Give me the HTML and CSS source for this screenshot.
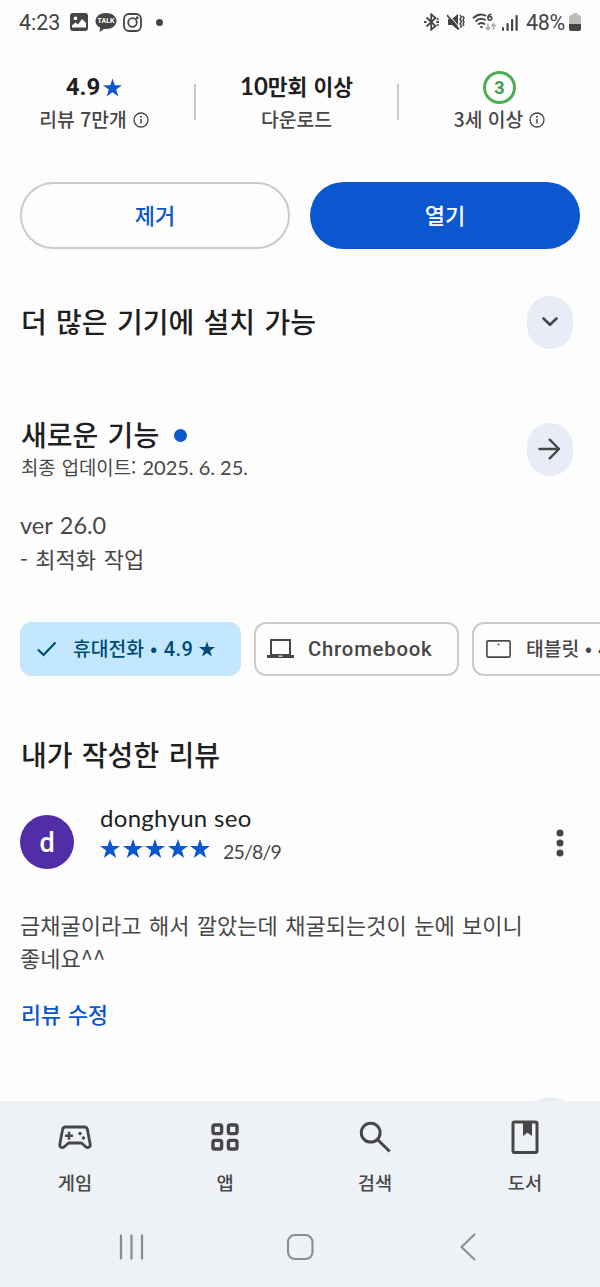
FILE: index.html
```html
<!DOCTYPE html>
<html lang="ko">
<head>
<meta charset="utf-8">
<title>Play</title>
<link rel="stylesheet" href="styles.css">
</head>
<body>
<svg class="defs" width="0" height="0">
  <symbol id="star" viewBox="0 0 20 19"><path d="M10 0l2.4 7.1h7.6l-6.1 4.5 2.3 7.4-6.2-4.5L3.8 19l2.3-7.4L0 7.1h7.6z"/></symbol>
  <symbol id="info" viewBox="0 0 16 16"><circle cx="8" cy="8" r="7" fill="none" stroke="currentColor" stroke-width="1.3"/><path d="M8 7v4.6" stroke="currentColor" stroke-width="1.5"/><circle cx="8" cy="4.7" r="1" fill="currentColor"/></symbol>
</svg>
<div class="screen">
  <header class="status">
    <div class="status-left">
      <span class="clock">4:23</span>
      <svg class="s-img" width="18" height="18" viewBox="0 0 18 18"><path fill="currentColor" fill-rule="evenodd" d="M3 0h12a3 3 0 0 1 3 3v12a3 3 0 0 1-3 3H3a3 3 0 0 1-3-3V3a3 3 0 0 1 3-3zM2 14.5h14V10l-4-4-4 5.5-2.500-2L2 12.500zM5.500 3.500a1.800 1.800 0 1 0 .01 0z"/></svg>
      <span class="talk">
        <svg width="22" height="19" viewBox="0 0 22 19"><path fill="currentColor" d="M11 0c6 0 10.500 3.500 10.500 8S17 16 11 16l-2-.1L4.500 19l.7-4.200C2.200 13.400.500 11 .500 8 .500 3.500 5 0 11 0z"/></svg>
        <b class="talk-label">TALK</b>
      </span>
      <svg class="s-insta" width="19" height="19" viewBox="0 0 19 19" fill="none" stroke="currentColor" stroke-width="1.8"><rect x="1" y="1" width="17" height="17" rx="5"/><circle cx="9.500" cy="9.500" r="4.300"/><circle cx="14.200" cy="4.800" r=".6"/></svg>
      <span class="s-dot"></span>
    </div>
    <div class="status-right">
      <svg width="17" height="18" viewBox="0 0 17 18" fill="none" stroke="currentColor" stroke-width="1.800"><path d="M3.500 4.500l9 8.500-4.300 3.700V1.300l4.300 3.700-9 8.500"/><path d="M1 9h2.500M13.200 9h2.800M14 6.500l1.500-1M14 11.500l1.500 1" /></svg>
      <svg width="18" height="18" viewBox="0 0 18 18" fill="none" stroke="currentColor"><path fill="currentColor" stroke="none" d="M1 6h4l6-5v16l-6-5H1z"/><path d="M1.300 1l12 14.500" stroke="#fdfdfd" stroke-width="1"/><path d="M0 2l12 14.500" stroke-width="1.700"/><path d="M13 2l1.500 2-1.500 2 1.500 2.500L13 11l1.500 2-1 2M16 3l1 2-1 2 1 2-1 2 1 2" stroke-width="1.500"/></svg>
      <svg width="25" height="19" viewBox="0 0 25 19" fill="none" stroke="currentColor" stroke-width="1.900"><path d="M1 5.300c4-4 9-4.600 13-2.400M3.500 8.500c3-3 7-3.400 10.200-1.200M6 11.500c2-2 5-2 7 0"/><circle cx="9.500" cy="14" r="1.200" fill="currentColor" stroke="none"/><path d="M19.500 1.200c-3 .3-3.700 2-3.700 3.800M17.800 3.400a1.900 1.900 0 1 0 .1 0" stroke-width="1.600"/><path d="M16 10.500v6M13.800 14.300l2.200 2.500 2.200-2.500M21.500 17v-6M19.300 13.300l2.200-2.500 2.200 2.500" stroke="#aaa" stroke-width="1.500"/></svg>
      <svg class="s-signal" width="17" height="17" viewBox="0 0 17 17" fill="currentColor"><rect x="0" y="13" width="2" height="4" rx="1"/><rect x="4.500" y="9" width="2.200" height="8" rx="1"/><rect x="9" y="5" width="2.200" height="12" rx="1"/><rect x="13.500" y="1" width="2.200" height="16" rx="1"/></svg>
      <span class="percent">48%</span>
      <svg class="s-batt" width="12" height="18" viewBox="0 0 12 18"><path fill="#bcbcbc" d="M3.500 0h5v2H10a2 2 0 0 1 2 2v7H0V4a2 2 0 0 1 2-2h1.500z"/><path fill="currentColor" d="M0 11h12v5a2 2 0 0 1-2 2H2a2 2 0 0 1-2-2z"/></svg>
    </div>
  </header>

  <section class="stats">
    <div class="stat stat-rating">
      <div class="stat-top"><span class="score">4.9</span><svg class="blue" width="19" height="19"><use href="#star"/></svg></div>
      <div class="stat-sub">리뷰 7만개<svg width="16" height="16"><use href="#info"/></svg></div>
    </div>
    <i class="divider"></i>
    <div class="stat">
      <div class="stat-top stat-ko"><span class="lat">10</span>만회 이상</div>
      <div class="stat-sub">다운로드</div>
    </div>
    <i class="divider"></i>
    <div class="stat">
      <div class="stat-top"><span class="age">3</span></div>
      <div class="stat-sub">3세 이상<svg width="16" height="16"><use href="#info"/></svg></div>
    </div>
  </section>

  <section class="actions">
    <button class="btn btn-outline">제거</button>
    <button class="btn btn-fill">열기</button>
  </section>

  <section class="row row-devices">
    <h2 class="title">더 많은 기기에 설치 가능</h2>
    <span class="pill"><svg width="24" height="24" viewBox="0 0 24 24" fill="none" stroke="currentColor" stroke-width="2.600" stroke-linecap="round" stroke-linejoin="round"><path d="M5.500 8.500l6.500 6.300 6.500-6.300"/></svg></span>
  </section>

  <section class="row row-news">
    <div>
      <h2 class="title title-news">새로운 기능<i class="news-dot"></i></h2>
      <p class="updated">최종 업데이트: <span class="lat">2025. 6. 25.</span></p>
    </div>
    <span class="pill"><svg width="24" height="24" viewBox="0 0 24 24" fill="none" stroke="currentColor" stroke-width="2.400" stroke-linecap="round" stroke-linejoin="round"><path d="M1.500 12H21M11.700 2.700L21 12l-9.300 9.300"/></svg></span>
  </section>
  <p class="notes"><span class="lat ver">ver 26.0</span><br>- 최적화 작업</p>

  <div class="chips">
    <span class="chip chip-on">
      <svg width="20" height="16" viewBox="0 0 20 16" fill="none" stroke="currentColor" stroke-width="2.200"><path d="M1 8.500l5.500 5.500L18.500 1.500"/></svg>
      <span class="chip-text">휴대전화 • <span class="chip-num">4.9</span></span><svg class="chip-star" width="16" height="16"><use href="#star"/></svg>
    </span>
    <span class="chip chip-book">
      <svg width="27" height="20" viewBox="0 0 27 20"><path fill="none" stroke="currentColor" stroke-width="2" d="M4 1h19v15H4z"/><path fill="currentColor" d="M0 16h27v3H0z"/><path fill="#ddd" d="M11.500 16.500h4v1.300h-4z"/></svg>
      <span class="chrome">Chromebook</span>
    </span>
    <span class="chip chip-tab">
      <svg width="25" height="18" viewBox="0 0 25 18"><rect x=".9" y=".9" width="23.200" height="16.200" rx="1" fill="none" stroke="currentColor" stroke-width="1.600"/><circle cx="12.500" cy="4.500" r=".9" fill="currentColor"/></svg>
      <span class="chip-text">태블릿 • <span class="chip-num">4</span></span>
    </span>
  </div>

  <h2 class="title title-review">내가 작성한 리뷰</h2>
  <section class="reviewer">
    <span class="avatar">d</span>
    <div class="who">
      <div class="name">donghyun seo</div>
      <div class="rating">
        <svg width="20" height="19"><use href="#star"/></svg><svg width="20" height="19"><use href="#star"/></svg><svg width="20" height="19"><use href="#star"/></svg><svg width="20" height="19"><use href="#star"/></svg><svg width="20" height="19"><use href="#star"/></svg>
        <span class="date">25/8/9</span>
      </div>
    </div>
    <svg class="more" width="8" height="28" viewBox="0 0 8 28" fill="currentColor"><circle cx="4" cy="4" r="3.500"/><circle cx="4" cy="14" r="3.500"/><circle cx="4" cy="24" r="3.500"/></svg>
  </section>
  <p class="review">금채굴이라고 해서 깔았는데 채굴되는것이 눈에 보이니<br>좋네요<span class="caret">^^</span></p>
  <a class="edit">리뷰 수정</a>
  <div class="peek"><span class="pill"></span></div>

  <footer class="bottom">
    <nav class="tabs">
      <span class="tab"><svg width="36" height="36" viewBox="0 0 36 36" fill="none" stroke="currentColor" stroke-width="2.800" stroke-linejoin="round"><path d="M8.500 8h19c1.500 0 2.600 1 2.900 2.500l2.800 14.800c.5 3-2.500 4.300-4.500 2.500L24.500 24h-13l-4.200 3.800c-2 1.800-5 .5-4.500-2.500L5.600 10.500C5.900 9 7 8 8.500 8z"/><path d="M12 12.800v8M8 16.800h8" stroke-width="2.400"/><circle cx="23" cy="14.500" r="1.700" fill="currentColor" stroke="none"/><circle cx="26.500" cy="19" r="1.700" fill="currentColor" stroke="none"/></svg>게임</span>
      <span class="tab"><svg width="36" height="36" viewBox="0 0 36 36" fill="none" stroke="currentColor" stroke-width="3.400"><rect x="6" y="6" width="8.600" height="8.600" rx="1.800"/><rect x="21.400" y="6" width="8.600" height="8.600" rx="1.800"/><rect x="6" y="21.400" width="8.600" height="8.600" rx="1.800"/><rect x="21.400" y="21.400" width="8.600" height="8.600" rx="1.800"/></svg>앱</span>
      <span class="tab"><svg width="36" height="36" viewBox="0 0 36 36" fill="none" stroke="currentColor" stroke-width="3"><circle cx="13.700" cy="13.700" r="9.400"/><path d="M20.500 20.500l12.200 12"/></svg>검색</span>
      <span class="tab"><svg width="36" height="36" viewBox="0 0 36 36"><rect x="6" y="3" width="24" height="30.500" rx="1.500" fill="none" stroke="currentColor" stroke-width="3"/><path fill="currentColor" d="M16 3h9v14l-4.500-3.200L16 17z"/></svg>도서</span>
    </nav>
    <div class="sysnav">
      <svg width="26" height="28" viewBox="0 0 26 28" fill="none" stroke="currentColor" stroke-width="2.300" stroke-linecap="round"><path d="M2 2.500v23M12.500 2.500v23M23 2.500v23"/></svg>
      <svg class="home" width="28" height="28" viewBox="0 0 28 28" fill="none" stroke="currentColor" stroke-width="2.100"><rect x="2" y="2" width="24.500" height="24" rx="7"/></svg>
      <svg width="18" height="28" viewBox="0 0 18 28" fill="none" stroke="currentColor" stroke-width="2.100" stroke-linecap="round"><path d="M15.500 1.500L2.500 14l13 12.500"/></svg>
    </div>
  </footer>
</div>
</body>
</html>
```
FILE: styles.css
```css
* { box-sizing: border-box; margin: 0; padding: 0; }
body {
  background: #fdfdfd;
  color: #474747;
  font-family: "Noto Sans CJK KR", sans-serif;
  overflow: hidden;
}
svg { display: block; flex: none; }
.defs { position: absolute; }
.screen { width: 600px; height: 1287px; display: flex; flex-direction: column; overflow: hidden; }
.lat { font-family: Lato, sans-serif; }
.blue { fill: #0b57d0; }

.status { height: 44px; padding: 0 19px; display: flex; justify-content: space-between; align-items: center; color: #454545; font-family: Roboto, sans-serif; font-size: 21.5px; flex: none; }
.status-left, .status-right { display: flex; align-items: center; }
.clock { width: 51px; }
.talk { position: relative; margin: 0 6px 0 7px; }
.talk-label { position: absolute; left: 0; top: 4px; width: 22px; text-align: center; font-size: 7px; line-height: 8px; color: #fff; }
.s-dot { width: 7px; height: 7px; border-radius: 50%; background: #454545; margin-left: 14px; }
.status-right { gap: 7px; }
.s-signal { margin-left: -2px; }
.percent { letter-spacing: -0.3px; }
.s-batt { margin-left: -3px; }

.stats { height: 138px; padding-top: 25px; display: grid; grid-template-columns: 194px 2px 201px 2px 201px; flex: none; }
.stat { display: flex; flex-direction: column; align-items: center; }
.stat-rating { padding-right: 6px; }
.stat-top { height: 36px; display: flex; align-items: center; font-size: 21.500px; font-weight: 700; color: #1f1f1f; }
.score { font-family: Roboto, sans-serif; font-size: 24px; margin-right: 3px; }
.stat-ko { padding-bottom: 3px; }
.stat-ko .lat { font-size: 24px; }
.stat-sub { height: 28px; display: flex; align-items: center; gap: 6px; font-size: 19.300px; font-weight: 500; white-space: pre; }
.stat-sub svg { margin-top: 2px; }
.divider { width: 2px; height: 36px; margin-top: 15px; background: #c9c9c9; }
.age { width: 33px; height: 33px; border: 3px solid #4caf50; border-radius: 50%; color: #43a047; font: 700 18px/28px Roboto, sans-serif; text-align: center; }

.actions { display: grid; grid-template-columns: 1fr 1fr; gap: 20px; padding: 0 20px; height: 67px; flex: none; }
.btn { height: 67px; border-radius: 34px; font: 500 22px/30px "Noto Sans CJK KR", sans-serif; padding-bottom: 4px; }
.btn-outline { border: 2px solid #cbcbcb; background: transparent; color: #0b57d0; }
.btn-fill { border: 0; background: #0b57d0; color: #fff; }

.row { display: flex; justify-content: space-between; align-items: center; padding: 0 27px 0 21px; flex: none; }
.row-devices { height: 54px; margin-top: 46px; }
.row-devices .title { padding-bottom: 3px; height: 41px; }
.row-news { height: 66px; margin-top: 67px; }
.title { font-size: 28px; line-height: 38px; font-weight: 500; color: #1f1f1f; word-spacing: 1.500px; }
.title-news { display: flex; align-items: center; height: 34px; }
.news-dot { width: 13px; height: 13px; border-radius: 50%; background: #0b57d0; margin: 2px 0 0 15px; }
.pill { width: 46px; height: 53px; border-radius: 23px; background: #e8ecf6; display: flex; align-items: center; justify-content: center; flex: none; }
.updated { font-size: 18.800px; line-height: 32px; height: 30px; word-spacing: 1px; }
.updated .lat { font-size: 20px; word-spacing: 0; }
.notes { margin: 26px 20px 0; font-size: 22px; line-height: 33px; height: 67px; word-spacing: 1.500px; flex: none; }
.ver { font-size: 23.500px; }

.chips { display: flex; gap: 13px; margin: 47px 0 0 20px; height: 54px; flex: none; }
.chip { height: 54px; border: 2px solid #cbcbcb; border-radius: 12px; display: flex; align-items: center; flex: none; font-weight: 500; font-size: 19.300px; white-space: nowrap; }
.chip-text { padding-bottom: 2px; word-spacing: 1px; }
.chip-on { width: 221px; padding-left: 15px; border-color: #c2e7ff; background: #c2e7ff; color: #004a77; fill: #004a77; }
.chip-on .chip-text { margin: 0 6px 0 16px; }
.chip-num { font-family: Roboto, sans-serif; font-size: 20px; letter-spacing: .5px; }
.chip-book { width: 205px; padding-left: 11px; }
.chrome { font: 500 20.300px/26px Roboto, sans-serif; letter-spacing: .8px; margin-left: 14px; }
.chip-tab { width: 221px; padding-left: 12px; }
.chip-tab .chip-text { margin-left: 15px; word-spacing: .5px; }

.title-review { margin: 59px 21px 0; height: 40px; flex: none; }
.reviewer { display: flex; height: 64px; margin: 28px 36px 0 20px; flex: none; }
.avatar { width: 54px; height: 54px; margin-top: 12px; border-radius: 50%; background: #512da8; color: #fff; font: 500 27px/56px Roboto, sans-serif; text-align: center; }
.who { margin-left: 26px; flex: 1; }
.name { font: 400 24px/30px Lato, sans-serif; letter-spacing: .3px; color: #1f1f1f; }
.rating { display: flex; align-items: center; gap: 2.600px; height: 30px; fill: #0b57d0; }
.date { font: 400 19.500px/28px Lato, sans-serif; letter-spacing: -.8px; margin: 7px 0 0 10px; }
.more { margin-top: 26px; }
.review { margin: 41px 20px 0; font-size: 22px; line-height: 33px; height: 66px; word-spacing: 1.300px; white-space: nowrap; flex: none; }
.edit { margin: 24px 21px 0; font-size: 21.700px; line-height: 32px; font-weight: 500; color: #0b57d0; word-spacing: 1px; flex: none; }
.peek { height: 4px; margin-top: 67px; padding-right: 27px; display: flex; justify-content: flex-end; overflow: hidden; flex: none; }

.bottom { flex: 1; background: #eef2f7; }
.tabs { display: grid; grid-template-columns: repeat(4, 1fr); height: 106px; padding-top: 18px; }
.tab { display: flex; flex-direction: column; align-items: center; font-size: 18.700px; font-weight: 500; line-height: 26px; gap: 14px; }
.sysnav { display: flex; color: #8b8d91; padding: 26px 123px 0 119px; justify-content: space-between; }
.home { margin-right: 5px; }
```
